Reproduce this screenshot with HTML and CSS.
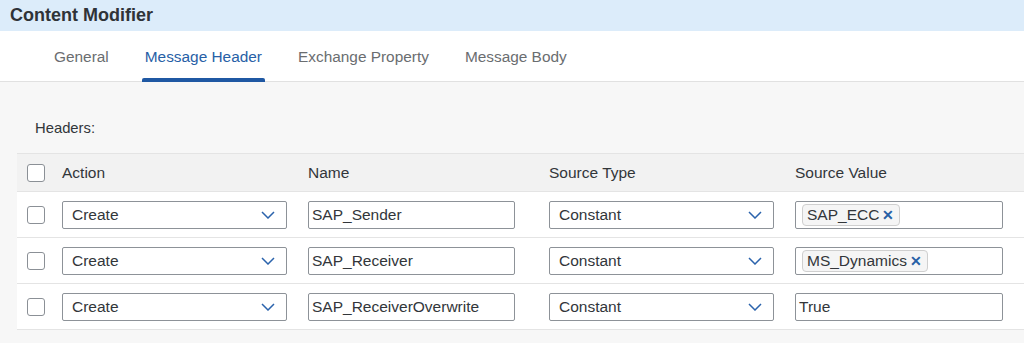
FILE: index.html
```html
<!DOCTYPE html>
<html lang="en">
<head>
    <meta charset="UTF-8">
    <title>Content Modifier</title>
    <link rel="stylesheet" href="styles.css">
</head>
<body>
    <div class="title-bar">Content Modifier</div>

    <div class="tab-bar">
        <div class="tab">General</div>
        <div class="tab active">Message Header</div>
        <div class="tab">Exchange Property</div>
        <div class="tab">Message Body</div>
    </div>

    <div class="content">
        <div class="section-label">Headers:</div>

        <div class="table">
            <div class="row head">
                <div class="cell check"><span class="checkbox"></span></div>
                <div class="cell">Action</div>
                <div class="cell">Name</div>
                <div class="cell">Source Type</div>
                <div class="cell">Source Value</div>
            </div>

            <div class="row">
                <div class="cell check"><span class="checkbox"></span></div>
                <div class="cell"><div class="select"><span>Create</span><svg class="chevron" width="14" height="8" viewBox="0 0 14 8"><path d="M1 1 L7 7 L13 1" fill="none" stroke="#2b63ac" stroke-width="1.5"/></svg></div></div>
                <div class="cell"><div class="input">SAP_Sender</div></div>
                <div class="cell"><div class="select wide"><span>Constant</span><svg class="chevron" width="14" height="8" viewBox="0 0 14 8"><path d="M1 1 L7 7 L13 1" fill="none" stroke="#2b63ac" stroke-width="1.5"/></svg></div></div>
                <div class="cell"><div class="input tokens"><span class="token">SAP_ECC<span class="token-x">✕</span></span></div></div>
            </div>

            <div class="row">
                <div class="cell check"><span class="checkbox"></span></div>
                <div class="cell"><div class="select"><span>Create</span><svg class="chevron" width="14" height="8" viewBox="0 0 14 8"><path d="M1 1 L7 7 L13 1" fill="none" stroke="#2b63ac" stroke-width="1.5"/></svg></div></div>
                <div class="cell"><div class="input">SAP_Receiver</div></div>
                <div class="cell"><div class="select wide"><span>Constant</span><svg class="chevron" width="14" height="8" viewBox="0 0 14 8"><path d="M1 1 L7 7 L13 1" fill="none" stroke="#2b63ac" stroke-width="1.5"/></svg></div></div>
                <div class="cell"><div class="input tokens"><span class="token">MS_Dynamics<span class="token-x">✕</span></span></div></div>
            </div>

            <div class="row">
                <div class="cell check"><span class="checkbox"></span></div>
                <div class="cell"><div class="select"><span>Create</span><svg class="chevron" width="14" height="8" viewBox="0 0 14 8"><path d="M1 1 L7 7 L13 1" fill="none" stroke="#2b63ac" stroke-width="1.5"/></svg></div></div>
                <div class="cell"><div class="input">SAP_ReceiverOverwrite</div></div>
                <div class="cell"><div class="select wide"><span>Constant</span><svg class="chevron" width="14" height="8" viewBox="0 0 14 8"><path d="M1 1 L7 7 L13 1" fill="none" stroke="#2b63ac" stroke-width="1.5"/></svg></div></div>
                <div class="cell"><div class="input plain">True</div></div>
            </div>
        </div>
    </div>
</body>
</html>
```

FILE: styles.css
```css
* {
    margin: 0;
    padding: 0;
    box-sizing: border-box;
}

body {
    font-family: 'Liberation Sans', Arial, sans-serif;
    color: #32363a;
    background: #f7f7f7;
    height: 343px;
    overflow: hidden;
}

.title-bar {
    height: 31px;
    background: #dcecfa;
    padding-left: 10px;
    font-size: 18px;
    font-weight: bold;
    line-height: 31px;
    color: #2f3338;
}

.tab-bar {
    height: 51px;
    background: #ffffff;
    border-bottom: 1px solid #e1e1e1;
    display: flex;
    gap: 30px;
    padding-left: 51px;
}

.tab {
    position: relative;
    padding: 0 3px;
    font-size: 15.4px;
    line-height: 52px;
    color: #6a6d70;
}

.tab.active {
    color: #2760a6;
}

.tab.active::after {
    content: '';
    position: absolute;
    left: 0;
    right: 0;
    bottom: -1px;
    height: 4px;
    background: #1f58a3;
    border-radius: 2px 2px 0 0;
}

.content {
    padding-top: 37px;
}

.section-label {
    padding-left: 35px;
    font-size: 14.8px;
    line-height: 18px;
    margin-bottom: 16px;
}

.table {
    margin-left: 17px;
    border-top: 1px solid #e4e4e4;
}

.row {
    display: grid;
    grid-template-columns: 45px 246px 241px 246px 1fr;
    align-items: center;
    height: 46px;
    background: #ffffff;
    border-bottom: 1px solid #e4e4e4;
}

.row.head {
    height: 38px;
    background: #f2f2f2;
    border-bottom: 1px solid #e4e4e4;
}

.cell {
    font-size: 15.5px;
}

.check {
    padding-left: 10px;
    display: flex;
    align-items: center;
}

.checkbox {
    display: block;
    width: 18px;
    height: 18px;
    border: 1px solid #8b9096;
    border-radius: 3px;
    background: #ffffff;
}

.select {
    width: 225px;
    height: 28px;
    border: 1px solid #8d9298;
    border-radius: 2px;
    background: #ffffff;
    display: flex;
    align-items: center;
    justify-content: space-between;
    padding: 0 11px 0 9px;
}

.chevron {
    display: block;
}

.input {
    width: 207px;
    height: 28px;
    border: 1px solid #8d9298;
    border-radius: 2px;
    background: #ffffff;
    display: flex;
    align-items: center;
    padding-left: 3px;
}

.input.tokens,
.input.plain {
    width: 208px;
}

.input.tokens {
    padding-left: 6px;
}

.token {
    display: flex;
    align-items: center;
    height: 22px;
    padding: 0 5px 0 4px;
    background: #f5f5f5;
    border: 1px solid #cfcfcf;
    border-radius: 4px;
}

.token-x {
    margin-left: 3px;
    color: #2760a6;
    font-size: 14px;
    font-weight: bold;
}
```
